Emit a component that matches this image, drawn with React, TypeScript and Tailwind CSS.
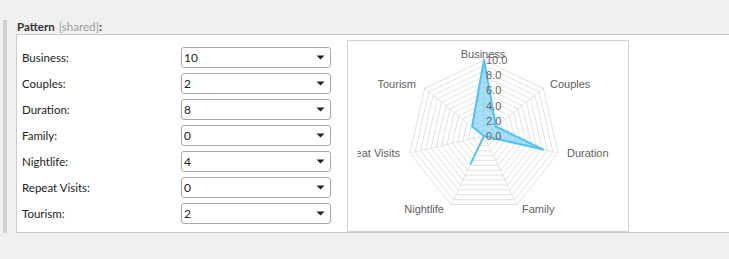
import React from "react";

const rows: [string, string][] = [
  ["Business:", "10"],
  ["Couples:", "2"],
  ["Duration:", "8"],
  ["Family:", "0"],
  ["Nightlife:", "4"],
  ["Repeat Visits:", "0"],
  ["Tourism:", "2"],
];

const values = [10, 2, 8, 0, 4, 0, 2];
const CX = 136;
const CY = 95;
const R = 76;

function pt(i: number, r: number): [number, number] {
  const a = ((-90 + (i * 360) / 7) * Math.PI) / 180;
  return [CX + r * Math.cos(a), CY + r * Math.sin(a)];
}

function poly(r: number) {
  return Array.from({ length: 7 }, (_, i) => pt(i, r).map((n) => n.toFixed(2)).join(",")).join(" ");
}

function Radar() {
  const rings = 14;
  const data = values.map((v, i) => pt(i, (v / 10) * R).map((n) => n.toFixed(2)).join(",")).join(" ");
  const labelStyle = { fontFamily: '"Liberation Sans", Arial, sans-serif', fontSize: 11 } as const;
  return (
    <svg width="280" height="190" viewBox="0 0 280 190" className="block">
      <defs>
        <clipPath id="clipL">
          <rect x="9.5" y="0" width="270" height="190" />
        </clipPath>
      </defs>
      {Array.from({ length: rings }, (_, k) => (
        <polygon key={k} points={poly(((k + 1) / rings) * R)} fill="none" stroke="#e2e2e2" strokeWidth="1" />
      ))}
      {Array.from({ length: 7 }, (_, i) => {
        const [x, y] = pt(i, R);
        return <line key={i} x1={CX} y1={CY} x2={x} y2={y} stroke="#e2e2e2" strokeWidth="1" />;
      })}
      <polygon points={data} fill="rgba(79,195,247,0.5)" stroke="#4fc3f7" strokeWidth="2" strokeLinejoin="round" />
      <g fill="#666" style={labelStyle}>
        {[10, 8, 6, 4, 2, 0].map((v) => (
          <text key={v} x="138" y={CY - v * 7.6 + 4}>
            {v.toFixed(1)}
          </text>
        ))}
      </g>
      <g fill="#606060" style={labelStyle} clipPath="url(#clipL)">
        <text x="135" y="17" textAnchor="middle">Business</text>
        <text x="202" y="47">Couples</text>
        <text x="219" y="116">Duration</text>
        <text x="174" y="172">Family</text>
        <text x="96" y="172" textAnchor="end">Nightlife</text>
        <text x="52" y="116" textAnchor="end">Repeat Visits</text>
        <text x="68" y="47" textAnchor="end">Tourism</text>
      </g>
    </svg>
  );
}

export default function App() {
  return (
    <div className="h-[259px] w-[729px] overflow-hidden bg-[#f0f0f1] pt-[20px] pl-[3px] font-['Lato',sans-serif] text-[11.5px] text-[#222]">
      <div className="flex">
        <div className="h-[213px] w-[4px] bg-[#cfcfcf]" />
        <div className="ml-[9px] flex-1">
          <div className="flex h-[14px] items-center pl-[1px] leading-none">
            <span className="font-bold text-[#333]">Pattern</span>
            <span className="ml-[4px] text-[#999]">[shared]</span>
            <span className="font-bold text-[#333]">:</span>
          </div>
          <div className="flex h-[199px] items-start border border-r-0 border-[#cccccc] bg-white pt-[5px] pl-[5px]">
            <div className="mt-[7px] flex flex-col gap-[5px]">
              {rows.map(([label, val]) => (
                <div key={label} className="flex h-[21px] items-center">
                  <div className="w-[159px]">{label}</div>
                  <div className="flex h-[21px] w-[150px] items-center justify-between rounded-[3px] border border-[#a8a8a8] bg-white pl-[2px] pr-[5px] text-[12px]">
                    <span>{val}</span>
                    <svg width="9" height="5" viewBox="0 0 9 5">
                      <path d="M0.5 0.5 L8.5 0.5 L4.5 4.5 Z" fill="#222" />
                    </svg>
                  </div>
                </div>
              ))}
            </div>
            <div className="ml-[16px] h-[192px] w-[282px] border border-[#cfcfcf] bg-white">
              <Radar />
            </div>
          </div>
        </div>
      </div>
    </div>
  );
}
